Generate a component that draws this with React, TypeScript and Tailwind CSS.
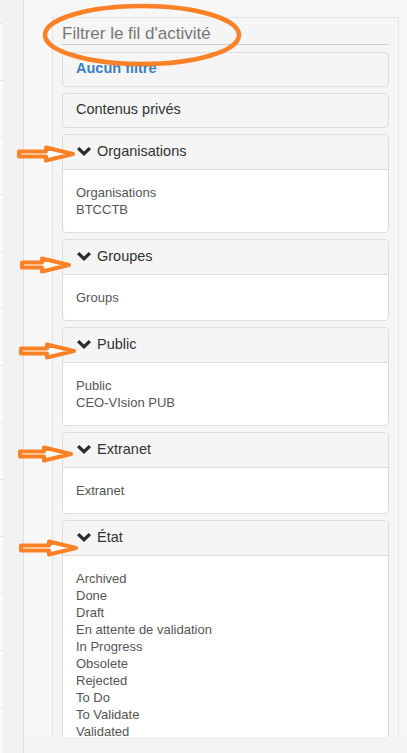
import React from "react";

const sections = [
  { title: "Organisations", items: ["Organisations", "BTCCTB"] },
  { title: "Groupes", items: ["Groups"] },
  { title: "Public", items: ["Public", "CEO-VIsion PUB"] },
  { title: "Extranet", items: ["Extranet"] },
  {
    title: "État",
    items: [
      "Archived",
      "Done",
      "Draft",
      "En attente de validation",
      "In Progress",
      "Obsolete",
      "Rejected",
      "To Do",
      "To Validate",
      "Validated",
    ],
  },
];

// hand-drawn annotation arrows (page coordinates)
const arrows = [
  { x: 17, cy: 154, w: 59 },
  { x: 20, cy: 265, w: 52 },
  { x: 19, cy: 351, w: 58 },
  { x: 18, cy: 454, w: 56 },
  { x: 19, cy: 548, w: 60 },
];

function Chevron() {
  return (
    <svg width="14" height="9" viewBox="0 0 14 9" className="shrink-0">
      <polygon points="0,2.3 2.3,0 7,4.6 11.7,0 14,2.3 7,9" fill="#2b2b2b" />
    </svg>
  );
}

function Arrow({ x, cy, w }: { x: number; cy: number; w: number }) {
  const head = w - 30;
  return (
    <svg
      width={w}
      height="18"
      viewBox={`0 0 ${w} 18`}
      className="absolute"
      style={{ left: x, top: cy - 9 }}
    >
      <path
        d={`M2 6.5 H${head} V2.5 L${w - 3} 9 L${head} 15.5 V11.5 H2 Z`}
        fill="#ffffff"
        stroke="#fb8126"
        strokeWidth="4"
        strokeLinejoin="round"
      />
    </svg>
  );
}

function Section({ title, items }: { title: string; items: string[] }) {
  return (
    <div className="border border-[#dddddd] rounded-[4px] bg-white overflow-hidden">
      <div className="h-[35px] bg-[#f5f5f5] border-b border-[#dddddd] flex items-center gap-[6px] pl-[14px] pb-[1px] text-[14.5px] text-[#333]">
        <Chevron />
        <span>{title}</span>
      </div>
      <div className="pt-[14px] pb-[14px] pl-[13px] text-[13px] leading-[17px] text-[#555]">
        {items.map((it) => (
          <div key={it}>{it}</div>
        ))}
      </div>
    </div>
  );
}

export default function App() {
  return (
    <div
      className="relative flex h-[753px] w-[407px] overflow-hidden bg-[#f7f7f7]"
      style={{ fontFamily: '"Liberation Sans", Arial, sans-serif' }}
    >
      {/* left column edge */}
      <div className="w-[24px] shrink-0 bg-[#f1f1f1] border-r border-[#e1e1e1] pt-[23px]">
        <div className="w-[3px] flex flex-col">
          {Array.from({ length: 13 }).map((_, i) => (
            <div key={i} className="h-[57px] border-t border-[#e4e4e4] bg-[#fafafa]" />
          ))}
        </div>
      </div>

      <div className="flex-1 flex flex-col min-w-0">
        <div className="h-[737px] overflow-hidden pl-[28px] pr-[8px] pt-[17px]">
          <div className="h-[800px] border border-[#e3e3e3] bg-[#f5f5f5] px-[9px] pt-[6px]">
            <div className="h-[20px] leading-[20px] text-[17px] text-[#777] border-b border-[#cfcfcf] box-content">
              Filtrer le fil d'activité
            </div>
            <div className="mt-[7px] flex flex-col gap-[6px]">
              <div className="h-[35px] border border-[#dddddd] rounded-[4px] bg-[#f5f5f5] flex items-center pl-[13px] pb-[2px] text-[14.5px] font-bold text-[#3b7fc4]">
                Aucun filtre
              </div>
              <div className="h-[35px] border border-[#dddddd] rounded-[4px] bg-[#f5f5f5] flex items-center pl-[13px] pb-[2px] text-[14.5px] text-[#333]">
                Contenus privés
              </div>
              {sections.map((s) => (
                <Section key={s.title} title={s.title} items={s.items} />
              ))}
            </div>
          </div>
        </div>
        <div className="flex-1 bg-[#f4f4f4]" />
      </div>

      {/* annotations */}
      <svg width="220" height="72" viewBox="0 0 220 72" className="absolute left-[36px] top-0">
        <ellipse cx="106" cy="35" rx="97" ry="29" fill="none" stroke="#fb8126" strokeWidth="4.5" />
      </svg>
      {arrows.map((a, i) => (
        <Arrow key={i} x={a.x} cy={a.cy} w={a.w} />
      ))}
    </div>
  );
}
